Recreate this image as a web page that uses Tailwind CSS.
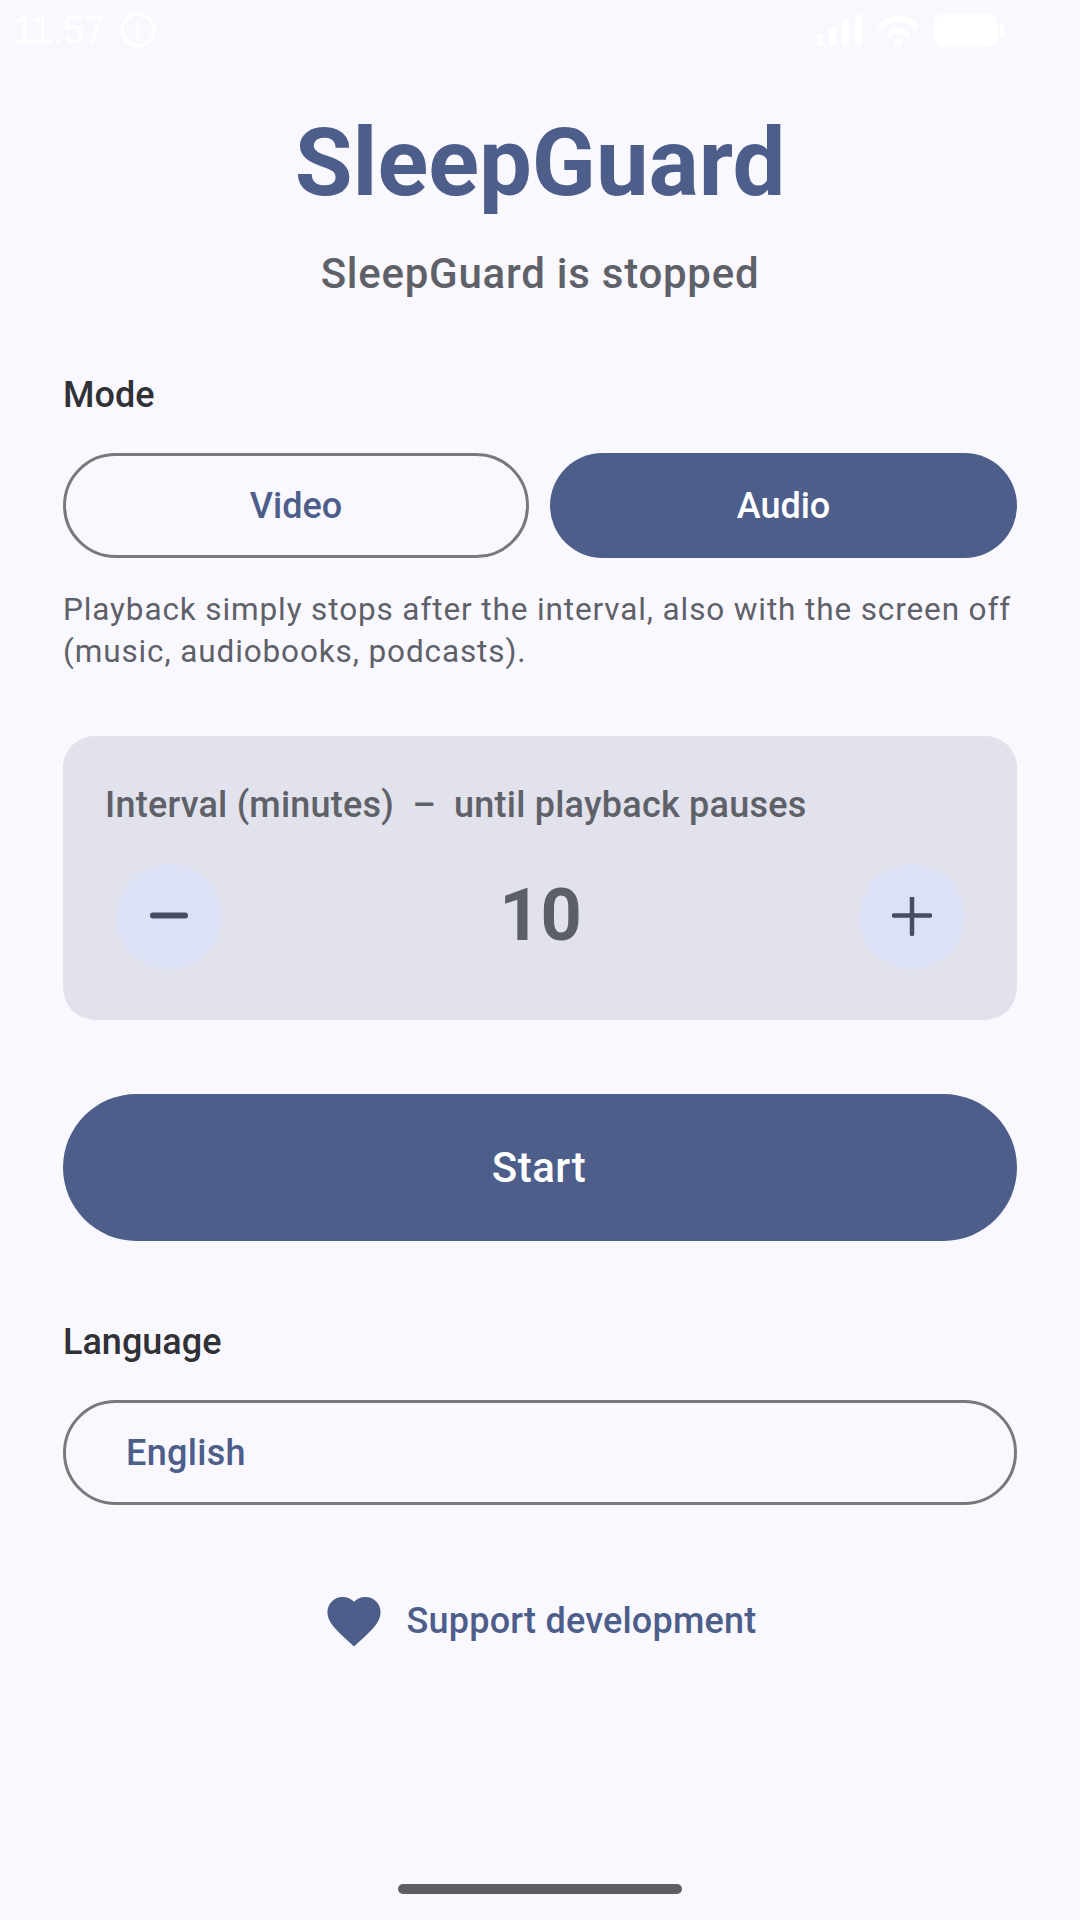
<!DOCTYPE html>
<html lang="en">
<head>
  <meta charset="UTF-8">
  <title>SleepGuard</title>
  <script src="https://cdn.jsdelivr.net/npm/@tailwindcss/browser@4"></script>
</head>
<body class="bg-[#faf8ff] font-['Roboto',sans-serif]">
  <div class="w-[1080px] h-[1920px] flex flex-col overflow-hidden relative">
    <!-- status bar -->
    <div class="h-[60px] flex items-center justify-between pl-[13px] pr-[76px] text-white shrink-0">
      <div class="flex items-center gap-[15px]">
        <span class="text-[38px] font-normal leading-none font-['Liberation_Sans',sans-serif]">11:57</span>
        <svg width="36" height="36" viewBox="0 0 36 36" fill="none" stroke="white" stroke-width="3"><circle cx="18" cy="18" r="16"/><path d="M18 10v3.500M18 16.500v10"/></svg>
      </div>
      <div class="flex items-center gap-[16px]">
        <svg width="46" height="32" viewBox="0 0 46 32" fill="white"><rect x="0" y="20" width="7" height="12" rx="3"/><rect x="13" y="13" width="7" height="19" rx="3"/><rect x="26" y="6" width="7" height="26" rx="3"/><rect x="39" y="0" width="7" height="32" rx="3"/></svg>
        <svg width="40" height="33" viewBox="0 0 42 34" fill="none" stroke="white" stroke-linecap="round"><path d="M3 12C13 2 29 2 39 12" stroke-width="6"/><path d="M12 21c5-5 13-5 18 0" stroke-width="6"/><circle cx="21" cy="30" r="4" fill="white" stroke="none"/></svg>
        <svg width="70" height="33" viewBox="0 0 70 33" fill="white"><rect x="0" y="0" width="64" height="33" rx="10"/><rect x="66" y="9" width="4" height="15" rx="2"/></svg>
      </div>
    </div>

    <div class="px-[63px] flex flex-col">
      <h1 class="mt-[53px] text-center text-[94px] leading-[100px] font-bold text-[#4d5e8a]">SleepGuard</h1>
      <p class="mt-[35px] text-center text-[42px] leading-[52px] font-medium text-[#5f6169] tracking-[0.75px]">SleepGuard is stopped</p>

      <div class="mt-[71px] text-[36px] leading-[48px] font-medium text-[#303136]">Mode</div>
      <div class="mt-[34px] flex gap-[21px]">
        <div class="w-[466px] h-[105px] rounded-full border-[3px] border-[#787880] flex items-center justify-center text-[36px] font-medium text-[#4d5e8a]">Video</div>
        <div class="w-[467px] h-[105px] rounded-full bg-[#4d5e8a] flex items-center justify-center text-[36px] font-medium text-white">Audio</div>
      </div>
      <p class="mt-[31px] text-[31.5px] leading-[42px] text-[#5f6169] tracking-[0.88px]">Playback simply stops after the interval, also with the screen off (music, audiobooks, podcasts).</p>

      <div class="mt-[63px] h-[284px] rounded-[32px] bg-[#e2e2ec] px-[42px] pt-[47px]">
        <div class="text-[36px] leading-[44px] font-medium text-[#5f6169] whitespace-pre tracking-[0.22px]">Interval (minutes)  –  until playback pauses</div>
        <div class="mt-[37px] flex items-center justify-between pl-[11px] pr-[10px]">
          <div class="w-[106px] h-[105px] rounded-full bg-[#dde1f5] flex items-center justify-center">
            <svg width="40" height="40" viewBox="0 0 40 40" stroke="#464c63" stroke-width="6" stroke-linecap="round"><path d="M4 18.500h32"/></svg>
          </div>
          <div class="text-[72px] leading-none font-bold text-[#5c5e68] pb-[2px]">10</div>
          <div class="w-[106px] h-[105px] rounded-full bg-[#dde1f5] flex items-center justify-center">
            <svg width="40" height="40" viewBox="0 0 40 40" stroke="#464c63" stroke-width="4.500" stroke-linecap="round"><path d="M2 18.500h36M20 1v36"/></svg>
          </div>
        </div>
      </div>

      <div class="mt-[74px] h-[147px] rounded-full bg-[#4d5e8a] flex items-center justify-center text-[42px] font-medium text-white tracking-[0.5px] pr-[2px]">Start</div>

      <div class="mt-[77px] text-[36px] leading-[48px] font-medium text-[#303136]">Language</div>
      <div class="mt-[34px] h-[105px] rounded-full border-[3px] border-[#787880] flex items-center pl-[60px] text-[36px] font-medium text-[#4d5e8a] tracking-[0.3px]">English</div>

      <div class="mt-[91px] ml-[3px] flex items-center justify-center gap-[26px]">
        <svg width="54" height="49" viewBox="1.500 2.500 21 19.350" fill="#4d5e8a" stroke="#4d5e8a" stroke-width="1" stroke-linejoin="round"><path d="M12 21.350l-1.450-1.320C5.400 15.360 2 12.280 2 8.500 2 5.420 4.420 3 7.500 3c1.740 0 3.410.81 4.500 2.090C13.090 3.810 14.760 3 16.500 3 19.580 3 22 5.420 22 8.500c0 3.780-3.400 6.860-8.550 11.540L12 21.350z"/></svg>
        <span class="text-[36px] leading-[50px] font-medium text-[#4d5e8a] tracking-[0.2px]">Support development</span>
      </div>
    </div>

    <!-- gesture bar -->
    <div class="absolute left-[398px] top-[1884px] w-[284px] h-[10px] rounded-full bg-[#5f5f63]"></div>
  </div>
</body>
</html>
